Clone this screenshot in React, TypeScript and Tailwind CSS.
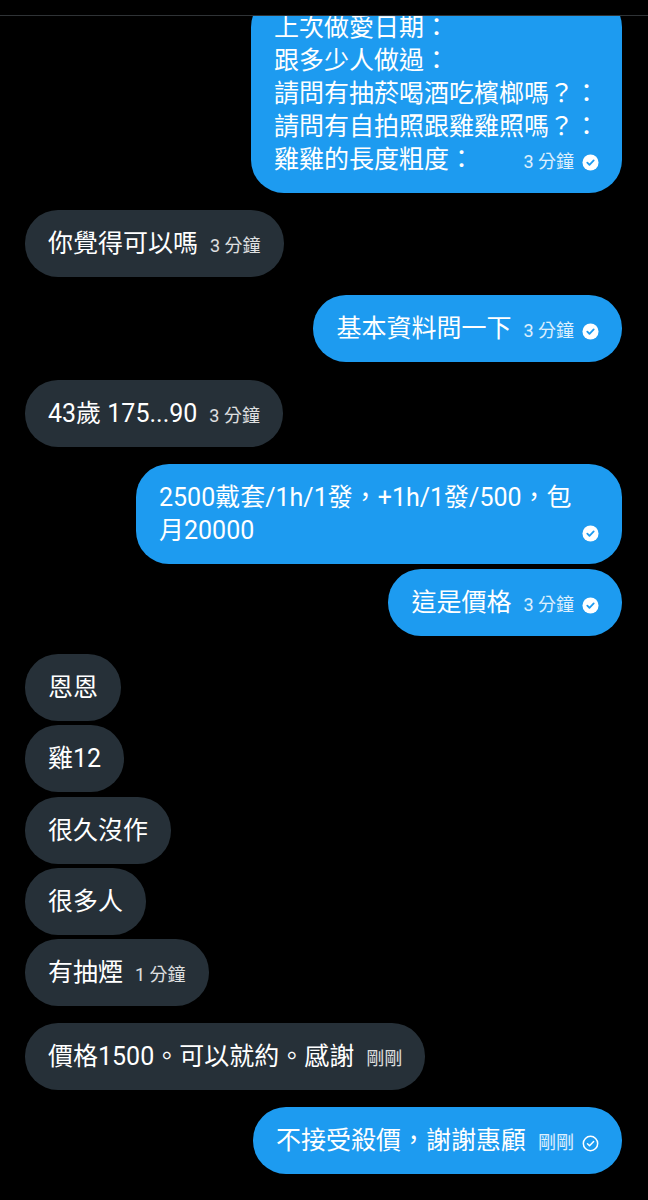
import type { ReactNode } from 'react';

type Msg = {
  side: 'in' | 'out';
  text: string;
  time?: string;
  check?: 'read' | 'sent';
  gap: string;
  wide?: boolean;
};

const messages: Msg[] = [
  {
    side: 'out',
    text: '上次做愛日期：\n跟多少人做過：\n請問有抽菸喝酒吃檳榔嗎？：\n請問有自拍照跟雞雞照嗎？：\n雞雞的長度粗度：',
    time: '3 分鐘',
    check: 'read',
    gap: 'mt-[-22px]',
  },
  { side: 'in', text: '你覺得可以嗎', time: '3 分鐘', gap: 'mt-[17px]' },
  { side: 'out', text: '基本資料問一下', time: '3 分鐘', check: 'read', gap: 'mt-[18px]' },
  { side: 'in', text: '43歲 175...90', time: '3 分鐘', gap: 'mt-[18px]' },
  // wraps after 包 in the screenshot, bubble is at full width
  { side: 'out', text: '2500戴套/1h/1發，+1h/1發/500，包\n月20000', check: 'read', gap: 'mt-[17px]', wide: true },
  { side: 'out', text: '這是價格', time: '3 分鐘', check: 'read', gap: 'mt-[5px]' },
  { side: 'in', text: '恩恩', gap: 'mt-[18px]' },
  { side: 'in', text: '雞12', gap: 'mt-[4px]' },
  { side: 'in', text: '很久沒作', gap: 'mt-[5px]' },
  { side: 'in', text: '很多人', gap: 'mt-[4px]' },
  { side: 'in', text: '有抽煙', time: '1 分鐘', gap: 'mt-[4px]' },
  { side: 'in', text: '價格1500。可以就約。感謝', time: '剛剛', gap: 'mt-[17px]' },
  { side: 'out', text: '不接受殺價，謝謝惠顧', time: '剛剛', check: 'sent', gap: 'mt-[17px]' },
];

function ReadIcon() {
  return (
    <svg width="17" height="17" viewBox="0 0 18 18">
      <circle cx="9" cy="9" r="8.5" fill="#ffffff" />
      <path d="M5.6 9.2l2.3 2.2 4.5-4.6" fill="none" stroke="#1d9bf0" strokeWidth="1.9" strokeLinecap="round" strokeLinejoin="round" />
    </svg>
  );
}

function SentIcon() {
  return (
    <svg width="17" height="17" viewBox="0 0 18 18">
      <circle cx="9" cy="9" r="7.6" fill="none" stroke="#ffffff" strokeWidth="1.6" />
      <path d="M5.8 9.2l2.2 2.1 4.3-4.4" fill="none" stroke="#ffffff" strokeWidth="1.6" strokeLinecap="round" strokeLinejoin="round" />
    </svg>
  );
}

function Meta({ time, check }: { time?: string; check?: 'read' | 'sent' }) {
  if (!time && !check) return null;
  let icon: ReactNode = null;
  if (check === 'read') icon = <ReadIcon />;
  if (check === 'sent') icon = <SentIcon />;
  return (
    <span className="float-right ml-3 flex h-[33px] items-center gap-2 pt-[5px] text-[18px] leading-none text-white/85">
      {time && <span>{time}</span>}
      {icon}
    </span>
  );
}

function Bubble({ msg }: { msg: Msg }) {
  const out = msg.side === 'out';
  return (
    <div className={`flex ${out ? 'justify-end' : 'justify-start'} ${msg.gap}`}>
      <div
        className={`${msg.wide ? 'w-[486px]' : 'max-w-[486px]'} rounded-[33px] px-[23px] py-[17px] text-[25px] leading-[33px] whitespace-pre-line text-white ${
          out ? 'bg-[#1d9bf0]' : 'bg-[#263038]'
        }`}
      >
        {msg.text}
        <Meta time={msg.time} check={msg.check} />
      </div>
    </div>
  );
}

export default function App() {
  return (
    <div className="h-[1200px] overflow-hidden bg-black font-['Roboto','Noto_Sans_CJK_TC',sans-serif]">
      <div className="h-[16px] border-b border-[#2f3336] bg-black" />
      <div className="h-[1184px] overflow-hidden px-[25px] pr-[26px]">
        {messages.map((m, i) => (
          <Bubble key={i} msg={m} />
        ))}
      </div>
    </div>
  );
}
